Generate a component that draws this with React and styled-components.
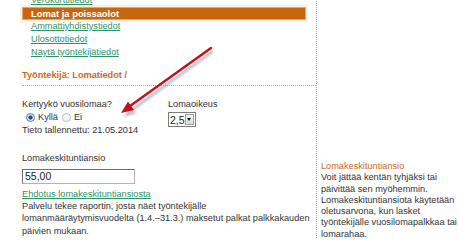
import styled, { createGlobalStyle } from "styled-components"

const GlobalStyle = createGlobalStyle`
    html, body {
        margin: 0;
        padding: 0;
        background: #fff;
        overflow: hidden;
    }
    body {
        font-family: "Liberation Sans", Arial, sans-serif;
        font-size: 9.2px;
        color: #333;
    }
`

const Screen = styled.div`
    position: relative;
    width: 458px;
    height: 239px;
    overflow: hidden;
`

const Page = styled.div`
    display: flex;
    align-items: stretch;
    margin-top: -6px;
    padding-left: 22px;
    min-height: 260px;
`

const Main = styled.div`
    width: 294px;
`

const Side = styled.div`
    width: 136px;
    border-left: 1px dotted #a8b0b4;
    padding: 167px 0 0 4px;
    line-height: 11.3px;
`

const Menu = styled.ul`
    list-style: none;
    margin: 0;
    padding: 0;
    width: 284px;
`

const MenuItem = styled.li`
    height: 13px;
    box-sizing: border-box;
    background: ${props => props.active ? '#c8660e' : 'transparent'};
    border: ${props => props.active ? '1px solid #eca45e' : 'none'};
    box-shadow: ${props => props.active ? '0 0 0 2px #fdf1e4' : 'none'};
    line-height: ${props => props.active ? '11px' : '13px'};
    padding-left: ${props => props.active ? '8px' : '9px'};
`

const MenuLink = styled.a`
    color: ${props => props.active ? '#fff' : '#2f9463'};
    font-weight: ${props => props.active ? 'bold' : 'normal'};
    font-size: ${props => props.active ? '9.4px' : '9.2px'};
    text-decoration: ${props => props.active ? 'none' : 'underline'};
`

const SectionTitle = styled.div`
    margin-top: 10px;
    padding-bottom: 3px;
    line-height: 13px;
    color: #cc6a1a;
    font-weight: bold;
    border-bottom: 1px dotted #a8b0b4;
`

const FieldRow = styled.div`
    display: flex;
    margin-top: 12px;
`

const Field = styled.div`
    width: ${props => props.width || 'auto'};
    line-height: 13px;
`

const Label = styled.div`
    line-height: 13px;
`

const Radios = styled.div`
    display: flex;
    align-items: center;
    height: 13px;
    padding-left: 4px;
`

const Radio = styled.span`
    width: 7px;
    height: 7px;
    border-radius: 50%;
    border: 1px solid ${props => props.checked ? '#5a7ea8' : '#b8c0c8'};
    background: ${props => props.checked ? 'radial-gradient(circle, #1d4f93 0 1.8px, #dbe6f2 2.4px)' : '#f4f6f8'};
    margin-right: 3px;
`

const RadioText = styled.span`
    margin-right: 4px;
`

const Select = styled.div`
    display: flex;
    align-items: center;
    width: 28px;
    height: 15px;
    margin-top: 1px;
    border: 1px solid #7c7c7c;
    box-sizing: border-box;
    background: #fff;
`

const SelectValue = styled.span`
    flex: 1;
    padding-left: 1px;
    font-size: 10.5px;
    line-height: 12px;
    color: #222;
`

const SelectButton = styled.span`
    width: 10px;
    height: 11px;
    margin-right: 1px;
    border: 1px solid #a0a0a0;
    box-sizing: border-box;
    background: linear-gradient(#f4f4f4, #dcdcdc);
    display: flex;
    align-items: center;
    justify-content: center;

    &::after {
        content: "";
        border-left: 2.5px solid transparent;
        border-right: 2.5px solid transparent;
        border-top: 3px solid #111;
    }
`

const Block = styled.div`
    margin-top: ${props => props.gap || '0'};
`

const TextInput = styled.div`
    width: 113px;
    height: 15px;
    margin-top: 4px;
    box-sizing: border-box;
    border: 1px solid #b4b4b4;
    border-top-color: #6e6e6e;
    border-left-color: #6e6e6e;
    padding-left: 2px;
    font-size: 10.5px;
    line-height: 13px;
    color: #222;
`

const HelpLink = styled.a`
    display: block;
    margin-top: 4px;
    line-height: 12px;
    color: #2f9463;
    text-decoration: underline;
`

const Paragraph = styled.p`
    margin: 0;
    width: 294px;
    line-height: 12.4px;
`

const SideTitle = styled.div`
    color: #cc6a1a;
`

const Arrow = () => (
    <svg
        width="458"
        height="239"
        style={{ position: 'absolute', left: 0, top: 0, pointerEvents: 'none' }}
    >
        <defs>
            <filter id="soft" x="-20%" y="-20%" width="140%" height="140%">
                <feGaussianBlur stdDeviation="1.2" />
            </filter>
        </defs>
        <g filter="url(#soft)" opacity="0.55">
            <line x1="213" y1="51" x2="133" y2="109" stroke="#8a9098" strokeWidth="3" />
            <polygon points="124,117 136,113.5 130.5,105" fill="#8a9098" />
        </g>
        <line x1="211" y1="48" x2="130" y2="106" stroke="#c4121c" strokeWidth="2.4" strokeLinecap="round" />
        <polygon points="121,113 134,110 128,101.5" fill="#c4121c" />
    </svg>
)

const App = () => {
    return (
        <Screen>
            <GlobalStyle />
            <Page>
                <Main>
                    <Menu>
                        <MenuItem><MenuLink>Verokorttitiedot</MenuLink></MenuItem>
                        <MenuItem active><MenuLink active>Lomat ja poissaolot</MenuLink></MenuItem>
                        <MenuItem><MenuLink>Ammattiyhdistystiedot</MenuLink></MenuItem>
                        <MenuItem><MenuLink>Ulosottotiedot</MenuLink></MenuItem>
                        <MenuItem><MenuLink>Näytä työntekijätiedot</MenuLink></MenuItem>
                    </Menu>

                    <SectionTitle>Työntekijä: Lomatiedot /</SectionTitle>

                    <FieldRow>
                        <Field width="146px">
                            <Label>Kertyykö vuosilomaa?</Label>
                            <Radios>
                                <Radio checked />
                                <RadioText>Kyllä</RadioText>
                                <Radio />
                                <RadioText>Ei</RadioText>
                            </Radios>
                            <Label>Tieto tallennettu: 21.05.2014</Label>
                        </Field>
                        <Field>
                            <Label>Lomaoikeus</Label>
                            <Select>
                                <SelectValue>2,5</SelectValue>
                                <SelectButton />
                            </Select>
                        </Field>
                    </FieldRow>

                    <Block gap="15px">
                        <Label>Lomakeskituntiansio</Label>
                        <TextInput>55,00</TextInput>
                        <HelpLink>Ehdotus lomakeskituntiansiosta</HelpLink>
                        <Paragraph>
                            Palvelu tekee raportin, josta näet työntekijälle lomanmääräytymisvuodelta (1.4.–31.3.) maksetut palkat palkkakauden päivien mukaan.
                        </Paragraph>
                    </Block>
                </Main>

                <Side>
                    <SideTitle>Lomakeskituntiansio</SideTitle>
                    Voit jättää kentän tyhjäksi tai päivittää sen myöhemmin. Lomakeskituntiansiota käytetään oletusarvona, kun lasket työntekijälle vuosilomapalkkaa tai lomarahaa.
                </Side>
            </Page>
            <Arrow />
        </Screen>
    )
}

export default App
